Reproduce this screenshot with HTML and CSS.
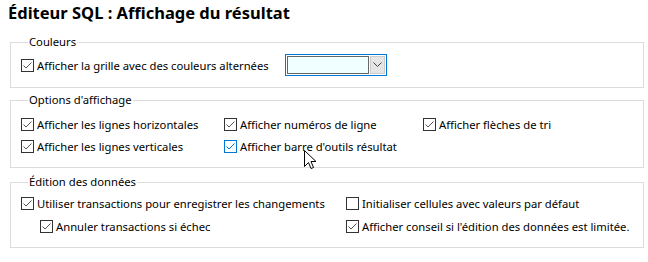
FILE: index.html
```html
<!DOCTYPE html>
<html>
<head>
    <title>Éditeur SQL : Affichage du résultat</title>
    <link rel="stylesheet" href="styles.css">
</head>
<body>
    <div class="page">
        <h1 class="page-title">Éditeur SQL : Affichage du résultat</h1>

        <fieldset class="group">
            <legend>Couleurs</legend>
            <div class="group-body colors-row">
                <label class="check"><span class="box"><svg viewBox="0 0 11 11"><path d="M1.5 5.5 L4 8 L9.5 2.5"/></svg></span>Afficher la grille avec des couleurs alternées</label>
                <div class="combo">
                    <div class="combo-field"></div>
                    <div class="combo-btn">
                        <svg width="9" height="6" viewBox="0 0 9 6"><path d="M0.5 0.5 L4.5 4.5 L8.5 0.5" fill="none" stroke="#444" stroke-width="1"/></svg>
                    </div>
                </div>
            </div>
        </fieldset>

        <fieldset class="group group-options">
            <legend>Options d'affichage</legend>
            <div class="group-body grid-options">
                <label class="check"><span class="box"><svg viewBox="0 0 11 11"><path d="M1.5 5.5 L4 8 L9.5 2.5"/></svg></span>Afficher les lignes horizontales</label>
                <label class="check"><span class="box"><svg viewBox="0 0 11 11"><path d="M1.5 5.5 L4 8 L9.5 2.5"/></svg></span>Afficher numéros de ligne</label>
                <label class="check"><span class="box"><svg viewBox="0 0 11 11"><path d="M1.5 5.5 L4 8 L9.5 2.5"/></svg></span>Afficher flèches de tri</label>
                <label class="check"><span class="box"><svg viewBox="0 0 11 11"><path d="M1.5 5.5 L4 8 L9.5 2.5"/></svg></span>Afficher les lignes verticales</label>
                <label class="check hover"><span class="box"><svg viewBox="0 0 11 11"><path d="M1.5 5.5 L4 8 L9.5 2.5"/></svg></span>Afficher barre d'outils résultat</label>
            </div>
            <svg class="cursor" width="13" height="21" viewBox="0 0 13 21">
                <path d="M0.5 0.5 L0.5 16.5 L4.5 12.5 L7 18.5 L9.5 17.5 L7 11.5 L12 11.5 Z" fill="#fff" stroke="#000" stroke-width="1"/>
            </svg>
        </fieldset>

        <fieldset class="group group-edit">
            <legend>Édition des données</legend>
            <div class="group-body grid-edit">
                <label class="check"><span class="box"><svg viewBox="0 0 11 11"><path d="M1.5 5.5 L4 8 L9.5 2.5"/></svg></span>Utiliser transactions pour enregistrer les changements</label>
                <label class="check"><span class="box"></span>Initialiser cellules avec valeurs par défaut</label>
                <label class="check indent"><span class="box"><svg viewBox="0 0 11 11"><path d="M1.5 5.5 L4 8 L9.5 2.5"/></svg></span>Annuler transactions si échec</label>
                <label class="check"><span class="box"><svg viewBox="0 0 11 11"><path d="M1.5 5.5 L4 8 L9.5 2.5"/></svg></span>Afficher conseil si l'édition des données est limitée.</label>
            </div>
        </fieldset>
    </div>
</body>
</html>
```

FILE: styles.css
```css
body {
    margin: 0;
    background: #fff;
    font-family: "Noto Sans", "Open Sans", sans-serif;
    font-size: 11.25px;
    color: #000;
}
.page {
    padding: 0 4px 0 10px;
}
.page-title {
    font-size: 16.5px;
    font-weight: bold;
    margin: 0 0 0 -2px;
    padding-top: 2px;
    height: 32px;
    line-height: 22px;
}
.group {
    margin: 0;
    padding: 0 10px;
    border: 1px solid #dcdcdc;
    min-width: 0;
}
.group legend {
    padding: 0 1px;
    margin-left: 7px;
    line-height: 16px;
}
.group-options {
    margin-top: 4px;
    position: relative;
}
.group-edit {
    margin-top: 6px;
}
.group-body {
    box-sizing: border-box;
}
.colors-row {
    display: flex;
    align-items: flex-start;
    gap: 16px;
    height: 37px;
    padding-top: 4px;
}
.colors-row .check {
    height: 22px;
}
.grid-options {
    display: grid;
    grid-template-columns: 203px 199px auto;
    grid-auto-rows: 16px;
    row-gap: 6px;
    height: 59px;
    padding-top: 8px;
}
.grid-edit {
    display: grid;
    grid-template-columns: 325px auto;
    grid-auto-rows: 16px;
    row-gap: 7px;
    height: 57px;
    padding-top: 5px;
}
.check {
    display: flex;
    align-items: center;
    height: 16px;
    white-space: nowrap;
}
.check.indent {
    padding-left: 19px;
}
.box {
    width: 11px;
    height: 11px;
    border: 1px solid #333;
    background: #fff;
    margin-right: 3px;
    flex: none;
}
.box svg {
    display: block;
    width: 11px;
    height: 11px;
}
.box path {
    fill: none;
    stroke: #555;
    stroke-width: 1;
}
.check.hover .box {
    border-color: #0078d7;
}
.check.hover .box path {
    stroke: #0078d7;
}
.combo {
    display: flex;
    width: 98px;
    height: 18px;
    padding: 1px;
    border: 1px solid #0078d7;
    background: #fff;
}
.combo-field {
    flex: 1;
    border: 1px solid #666;
    background: #f0ffff;
}
.combo-btn {
    width: 13px;
    margin-left: 1px;
    background: #e5e5e5;
    border: 1px solid #ccc;
    display: flex;
    align-items: center;
    justify-content: center;
}
.cursor {
    position: absolute;
    left: 293px;
    top: 42px;
}
```
